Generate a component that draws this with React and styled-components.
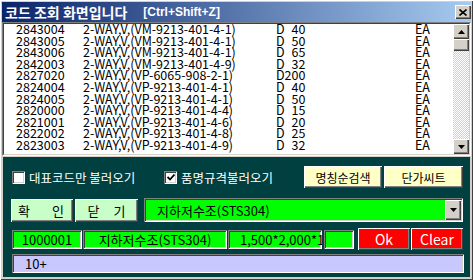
import React from "react";
import styled, { createGlobalStyle } from "styled-components";

const GlobalStyle = createGlobalStyle`
  html, body { margin: 0; padding: 0; background: #d4d0c8; }
  body { font-family: "Noto Sans CJK KR", "Liberation Sans", sans-serif; }
  * { box-sizing: border-box; }
`;

const raised = `
  box-shadow: inset 1px 1px #ffffff, inset -1px -1px #404040, inset -2px -2px #808080;
`;
const sunken = `
  box-shadow: inset 1px 1px #808080, inset -1px -1px #ffffff, inset 2px 2px #404040, inset -2px -2px #d4d0c8;
`;

const Window = styled.div`
  width: 473px;
  height: 280px;
  padding: 2px 2px 3px 2px;
  background: #d4d0c8;
  display: flex;
  flex-direction: column;
  box-shadow: inset 1px 1px #ffffff, inset -1px -1px #404040;
`;

const TitleBar = styled.div`
  height: 20px;
  flex: none;
  display: flex;
  align-items: center;
  padding-left: 3px;
  background: linear-gradient(to right, #0a246a, #a6caf0);
  color: #fff;
  font-weight: bold;
  font-size: 14px;
  white-space: pre;
`;

const Hotkey = styled.span`
  margin-left: 16px;
  font-family: "Liberation Sans", sans-serif;
  font-size: 12px;
`;

const CloseBtn = styled.div`
  margin-left: auto;
  width: 16px;
  height: 14px;
  background: #d4d0c8;
  display: flex;
  align-items: center;
  justify-content: center;
  ${raised}
`;

const List = styled.div`
  height: 134px;
  flex: none;
  border: 1px solid;
  border-color: #808080 #ffffff #ffffff #808080;
`;

const ListInner = styled.div`
  height: 100%;
  display: flex;
  border: 1px solid;
  border-color: #404040 #d4d0c8 #d4d0c8 #404040;
  background: #fff;
`;

const Rows = styled.div`
  flex: 1;
  overflow: hidden;
`;

const Row = styled.div`
  display: grid;
  grid-template-columns: 67px 193px 139px 1fr;
  align-items: start;
  height: 11.6px;
  line-height: 10px;
  padding-left: 12px;
  font-size: 12.5px;
  color: #000;
  white-space: pre;
`;

const Name = styled.span`
  width: 158px;
  overflow: hidden;
  padding-bottom: 4px;
  margin-bottom: -4px;
`;

const ScrollBar = styled.div`
  width: 16px;
  display: flex;
  flex-direction: column;
`;

const ScrollBtn = styled.div`
  height: ${(p) => p.$h}px;
  flex: none;
  background: #d4d0c8;
  display: flex;
  align-items: center;
  justify-content: center;
  ${raised}
`;

const Track = styled.div`
  flex: 1;
  background: repeating-conic-gradient(#d4d0c8 0 25%, #ffffff 0 50%) 0 0 / 2px 2px;
`;

const Panel = styled.div`
  flex: 1;
  margin-top: 1px;
  margin-left: 1px;
  margin-right: 1px;
  background: #004040;
  padding: 9px 6px 4px 8px;
  display: flex;
  flex-direction: column;
`;

const Line = styled.div`
  display: flex;
  align-items: center;
  gap: ${(p) => p.$gap || 0}px;
  margin-top: ${(p) => p.$mt || 0}px;
  height: ${(p) => p.$h}px;
`;

const CheckGroup = styled.label`
  display: flex;
  align-items: center;
  width: ${(p) => p.$w}px;
  margin-left: ${(p) => p.$ml || 0}px;
  color: #fff;
  font-size: 12.5px;
  white-space: pre;
`;

const CheckBox = styled.span`
  width: 13px;
  height: 13px;
  margin-right: 4px;
  background: #fff;
  display: flex;
  align-items: center;
  justify-content: center;
  ${sunken}
`;

const Button = styled.div`
  width: ${(p) => p.$w}px;
  height: ${(p) => p.$h || 22}px;
  flex: none;
  background: ${(p) => p.$bg};
  color: ${(p) => p.$color || "#000"};
  font-size: ${(p) => p.$fs || 12}px;
  display: flex;
  align-items: center;
  justify-content: ${(p) => p.$justify || "center"};
  gap: ${(p) => p.$gap || 0}px;
  padding: ${(p) => p.$pad || "0"};
  white-space: pre;
  ${raised}
`;

const Combo = styled.div`
  flex: 1;
  height: 24px;
  margin-left: 4px;
  margin-right: 1px;
  background: #00ff00;
  display: flex;
  align-items: center;
  padding: 2px 2px 2px 13px;
  font-size: 13px;
  ${sunken}
`;

const ComboText = styled.span`
  flex: 1;
`;

const DropBtn = styled.div`
  width: 16px;
  height: 20px;
  background: #d4d0c8;
  display: flex;
  align-items: center;
  justify-content: center;
  ${raised}
`;

const Field = styled.div`
  width: ${(p) => (p.$w ? `${p.$w}px` : "auto")};
  flex: ${(p) => (p.$w ? "none" : "1")};
  height: 19px;
  margin-left: ${(p) => p.$ml || 0}px;
  background: ${(p) => p.$bg || "#00ff00"};
  display: flex;
  align-items: center;
  justify-content: ${(p) => p.$justify || "center"};
  padding: ${(p) => p.$pad || "0 2px"};
  font-size: 13px;
  color: #000;
  overflow: hidden;
  white-space: pre;
  ${sunken}
`;

const rows = [
  ["2843004", "2-WAY,V,(VM-9213-401-4-1)", "D\u200740"],
  ["2843005", "2-WAY,V,(VM-9213-401-4-1)", "D\u200750"],
  ["2843006", "2-WAY,V,(VM-9213-401-4-1)", "D\u200765"],
  ["2842003", "2-WAY,V,(VM-9213-401-4-9)", "D\u200732"],
  ["2827020", "2-WAY,V,(VP-6065-908-2-1)", "D200"],
  ["2824004", "2-WAY,V,(VP-9213-401-4-1)", "D\u200740"],
  ["2824005", "2-WAY,V,(VP-9213-401-4-1)", "D\u200750"],
  ["2820000", "2-WAY,V,(VP-9213-401-4-4)", "D\u200715"],
  ["2821001", "2-WAY,V,(VP-9213-401-4-6)", "D\u200720"],
  ["2822002", "2-WAY,V,(VP-9213-401-4-8)", "D\u200725"],
  ["2823003", "2-WAY,V,(VP-9213-401-4-9)", "D\u200732"],
];

const Tri = ({ up }) => (
  <svg width="7" height="4" viewBox="0 0 7 4">
    <polygon points={up ? "3.5,0 7,4 0,4" : "0,0 7,0 3.5,4"} fill="#000" />
  </svg>
);

export default function App() {
  return (
    <>
      <GlobalStyle />
      <Window>
        <TitleBar>
          코드 조회 화면입니다
          <Hotkey>[Ctrl+Shift+Z]</Hotkey>
          <CloseBtn>
            <svg width="8" height="7" viewBox="0 0 8 7">
              <path d="M0.5 0.5 L7.5 6.5 M7.5 0.5 L0.5 6.5" stroke="#000" strokeWidth="1.6" />
            </svg>
          </CloseBtn>
        </TitleBar>
        <List>
          <ListInner>
            <Rows>
              {rows.map(([c, n, s]) => (
                <Row key={c}>
                  <span>{c}</span>
                  <Name>{n}</Name>
                  <span>{s}</span>
                  <span>EA</span>
                </Row>
              ))}
            </Rows>
            <ScrollBar>
              <ScrollBtn $h={15}><Tri up /></ScrollBtn>
              <ScrollBtn $h={12} />
              <Track />
              <ScrollBtn $h={15}><Tri /></ScrollBtn>
            </ScrollBar>
          </ListInner>
        </List>
        <Panel>
          <Line $h={22}>
            <CheckGroup $w={152} $ml={1}>
              <CheckBox />
              대표코드만 불러오기
            </CheckGroup>
            <CheckGroup $w={130}>
              <CheckBox>
                <svg width="8" height="7" viewBox="0 0 8 7">
                  <path d="M0.5 3 L3 5.5 L7.5 0.5" stroke="#000" strokeWidth="1.8" fill="none" />
                </svg>
              </CheckBox>
              품명규격불러오기
            </CheckGroup>
            <Button $w={78} $bg="#ffffc8" style={{ marginLeft: "auto" }}>명칭순검색</Button>
            <Button $w={79} $bg="#ffffc8" style={{ marginLeft: 2, marginRight: 1 }}>단가씨트</Button>
          </Line>
          <Line $h={24} $mt={10} $gap={2}>
            <Button $w={62} $h={23} $bg="#c8ffc8" $fs={13} $justify="space-between" $pad="0 9px 0 7px">
              <span>확</span>
              <span>인</span>
            </Button>
            <Button $w={63} $h={23} $bg="#c8ffc8" $fs={13} $gap={14}>
              <span>닫</span>
              <span>기</span>
            </Button>
            <Combo>
              <ComboText>지하저수조(STS304)</ComboText>
              <DropBtn><Tri /></DropBtn>
            </Combo>
          </Line>
          <Line $h={22} $mt={6}>
            <Field $w={70} $ml={1}>1000001</Field>
            <Field $w={144} $ml={1}>지하저수조(STS304)</Field>
            <Field $w={94} $ml={1} $justify="flex-start" $pad="0 0 0 12px">1,500*2,000*1,000</Field>
            <Field $w={30} $ml={2} />
            <Button $w={52} $bg="#ff0000" $color="#fff" $fs={14} style={{ marginLeft: 4 }}>Ok</Button>
            <Button $w={52} $bg="#ff0000" $color="#fff" $fs={14} style={{ marginLeft: 1 }}>Clear</Button>
          </Line>
          <Line $h={19} $mt={4}>
            <Field $ml={1} $bg="#c8c8ff" $justify="flex-start" $pad="0 0 0 13px">10+</Field>
          </Line>
        </Panel>
      </Window>
    </>
  );
}
